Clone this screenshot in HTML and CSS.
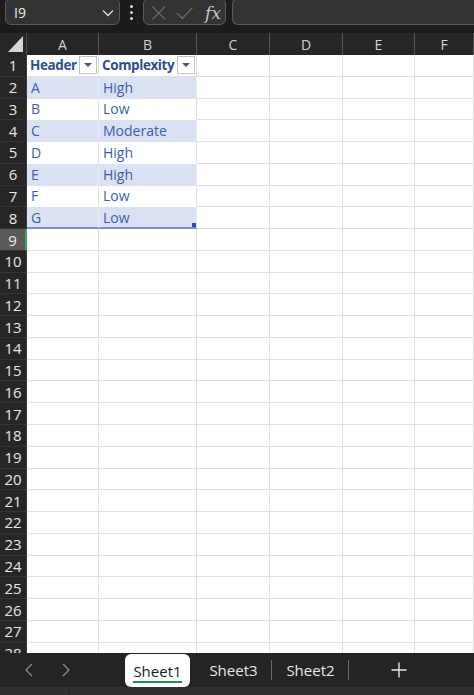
FILE: index.html
```html
<!DOCTYPE html>
<html>
<head>
<meta charset="utf-8">
<link rel="stylesheet" href="styles.css">
</head>
<body>
<div class="app">
  <div class="toolbar">
    <div class="namebox">
      <span class="ref">I9</span>
      <svg class="chev" width="12" height="8" viewBox="0 0 12 8"><path d="M1 1.5 L6 6.5 L11 1.5" fill="none" stroke="#d8d8d8" stroke-width="1.4"/></svg>
    </div>
    <div class="kebab"><i></i><i></i><i></i></div>
    <div class="fbtns">
      <svg width="16" height="16" viewBox="0 0 16 16"><path d="M1.5 1.5 L14.5 14.5 M14.5 1.5 L1.5 14.5" stroke="#6e6e6e" stroke-width="1.3"/></svg>
      <svg width="18" height="14" viewBox="0 0 18 14"><path d="M1 7 L6.5 12.5 L17 1.5" fill="none" stroke="#6e6e6e" stroke-width="1.3"/></svg>
      <span class="fx">fx</span>
    </div>
    <div class="fbar"></div>
  </div>

  <div class="sheet">
    <div class="row head">
      <div class="corner"><span class="tri"></span></div>
      <div class="ch">A</div><div class="ch">B</div><div class="ch">C</div><div class="ch">D</div><div class="ch">E</div><div class="ch">F</div>
    </div>
    <div class="row">
      <div class="rh">1</div>
      <div class="c th"><span class="tt">Header</span><span class="filter"></span></div>
      <div class="c th"><span class="tt">Complexity</span><span class="filter"></span></div>
      <div class="c"></div><div class="c"></div><div class="c"></div><div class="c"></div>
    </div>
    <div class="row">
      <div class="rh">2</div>
      <div class="c td band">A</div><div class="c td band">High</div>
      <div class="c"></div><div class="c"></div><div class="c"></div><div class="c"></div>
    </div>
    <div class="row">
      <div class="rh">3</div>
      <div class="c td">B</div><div class="c td">Low</div>
      <div class="c"></div><div class="c"></div><div class="c"></div><div class="c"></div>
    </div>
    <div class="row">
      <div class="rh">4</div>
      <div class="c td band">C</div><div class="c td band">Moderate</div>
      <div class="c"></div><div class="c"></div><div class="c"></div><div class="c"></div>
    </div>
    <div class="row">
      <div class="rh">5</div>
      <div class="c td">D</div><div class="c td">High</div>
      <div class="c"></div><div class="c"></div><div class="c"></div><div class="c"></div>
    </div>
    <div class="row">
      <div class="rh">6</div>
      <div class="c td band">E</div><div class="c td band">High</div>
      <div class="c"></div><div class="c"></div><div class="c"></div><div class="c"></div>
    </div>
    <div class="row">
      <div class="rh">7</div>
      <div class="c td">F</div><div class="c td">Low</div>
      <div class="c"></div><div class="c"></div><div class="c"></div><div class="c"></div>
    </div>
    <div class="row">
      <div class="rh">8</div>
      <div class="c td band last">G</div><div class="c td band last end">Low<span class="handle"></span></div>
      <div class="c"></div><div class="c"></div><div class="c"></div><div class="c"></div>
    </div>
    <div class="row"><div class="rh sel">9</div><div class="c"></div><div class="c"></div><div class="c"></div><div class="c"></div><div class="c"></div><div class="c"></div></div>
    <div class="row"><div class="rh">10</div><div class="c"></div><div class="c"></div><div class="c"></div><div class="c"></div><div class="c"></div><div class="c"></div></div>
    <div class="row"><div class="rh">11</div><div class="c"></div><div class="c"></div><div class="c"></div><div class="c"></div><div class="c"></div><div class="c"></div></div>
    <div class="row"><div class="rh">12</div><div class="c"></div><div class="c"></div><div class="c"></div><div class="c"></div><div class="c"></div><div class="c"></div></div>
    <div class="row"><div class="rh">13</div><div class="c"></div><div class="c"></div><div class="c"></div><div class="c"></div><div class="c"></div><div class="c"></div></div>
    <div class="row"><div class="rh">14</div><div class="c"></div><div class="c"></div><div class="c"></div><div class="c"></div><div class="c"></div><div class="c"></div></div>
    <div class="row"><div class="rh">15</div><div class="c"></div><div class="c"></div><div class="c"></div><div class="c"></div><div class="c"></div><div class="c"></div></div>
    <div class="row"><div class="rh">16</div><div class="c"></div><div class="c"></div><div class="c"></div><div class="c"></div><div class="c"></div><div class="c"></div></div>
    <div class="row"><div class="rh">17</div><div class="c"></div><div class="c"></div><div class="c"></div><div class="c"></div><div class="c"></div><div class="c"></div></div>
    <div class="row"><div class="rh">18</div><div class="c"></div><div class="c"></div><div class="c"></div><div class="c"></div><div class="c"></div><div class="c"></div></div>
    <div class="row"><div class="rh">19</div><div class="c"></div><div class="c"></div><div class="c"></div><div class="c"></div><div class="c"></div><div class="c"></div></div>
    <div class="row"><div class="rh">20</div><div class="c"></div><div class="c"></div><div class="c"></div><div class="c"></div><div class="c"></div><div class="c"></div></div>
    <div class="row"><div class="rh">21</div><div class="c"></div><div class="c"></div><div class="c"></div><div class="c"></div><div class="c"></div><div class="c"></div></div>
    <div class="row"><div class="rh">22</div><div class="c"></div><div class="c"></div><div class="c"></div><div class="c"></div><div class="c"></div><div class="c"></div></div>
    <div class="row"><div class="rh">23</div><div class="c"></div><div class="c"></div><div class="c"></div><div class="c"></div><div class="c"></div><div class="c"></div></div>
    <div class="row"><div class="rh">24</div><div class="c"></div><div class="c"></div><div class="c"></div><div class="c"></div><div class="c"></div><div class="c"></div></div>
    <div class="row"><div class="rh">25</div><div class="c"></div><div class="c"></div><div class="c"></div><div class="c"></div><div class="c"></div><div class="c"></div></div>
    <div class="row"><div class="rh">26</div><div class="c"></div><div class="c"></div><div class="c"></div><div class="c"></div><div class="c"></div><div class="c"></div></div>
    <div class="row"><div class="rh">27</div><div class="c"></div><div class="c"></div><div class="c"></div><div class="c"></div><div class="c"></div><div class="c"></div></div>
    <div class="row"><div class="rh">28</div><div class="c"></div><div class="c"></div><div class="c"></div><div class="c"></div><div class="c"></div><div class="c"></div></div>
  </div>

  <div class="tabs">
    <div class="nav">
      <svg width="8" height="14" viewBox="0 0 8 14"><path d="M7 1 L1 7 L7 13" fill="none" stroke="#8c8c8c" stroke-width="1.3"/></svg>
      <svg width="8" height="14" viewBox="0 0 8 14"><path d="M1 1 L7 7 L1 13" fill="none" stroke="#8c8c8c" stroke-width="1.3"/></svg>
    </div>
    <div class="tab active"><span>Sheet1</span></div>
    <div class="tab">Sheet3</div>
    <div class="tab">Sheet2</div>
    <div class="add">
      <svg width="16" height="16" viewBox="0 0 16 16"><path d="M8 0.5 V15.5 M0.5 8 H15.5" stroke="#e6e6e6" stroke-width="1.4"/></svg>
    </div>
  </div>
  <div class="status"><div class="seg"></div></div>
</div>
</body>
</html>
```

FILE: styles.css
```css
* { box-sizing: border-box; }
html, body { margin: 0; padding: 0; }
body {
  width: 474px;
  height: 695px;
  overflow: hidden;
  background: #1f1f1f;
  font-family: "Open Sans", "Noto Sans", sans-serif;
}
.app {
  display: flex;
  flex-direction: column;
  width: 474px;
  height: 695px;
}

/* toolbar */
.toolbar {
  height: 33px;
  flex: none;
  display: flex;
  align-items: flex-start;
  padding-left: 5px;
  background: #1c1c1c;
}
.namebox, .fbtns, .fbar {
  margin-top: -2px;
  height: 27px;
  background: #333333;
  border: 1px solid #5a5a5a;
  border-radius: 6px;
  display: flex;
  align-items: center;
}
.namebox {
  width: 115px;
  padding: 2px 4px 0 8px;
  justify-content: space-between;
}
.ref {
  color: #eeeeee;
  font-size: 14px;
}
.chev { margin-right: 1px; }
.kebab {
  width: 23px;
  height: 25px;
  display: flex;
  flex-direction: column;
  align-items: center;
  justify-content: center;
  gap: 3px;
}
.kebab i {
  display: block;
  width: 3px;
  height: 3px;
  border-radius: 50%;
  background: #dcdcdc;
}
.fbtns {
  width: 83px;
  padding: 2px 4px 0 7px;
  gap: 9px;
}
.fx {
  font-family: "DejaVu Serif", "Liberation Serif", serif;
  font-style: italic;
  font-size: 17px;
  color: #c8c8c8;
  margin-left: 3px;
}
.fbar {
  margin-left: 6px;
  flex: 1;
  border-right: none;
  border-radius: 6px 0 0 6px;
}

/* sheet */
.sheet {
  height: 620px;
  flex: none;
  overflow: hidden;
  background: #ffffff;
}
.row {
  display: grid;
  grid-template-columns: 27px 72px 98px 73px 73px 72px 59px;
  height: 21.77px;
}
.row.head {
  height: 22px;
  background: #262626;
}
.corner {
  position: relative;
  background: #262626;
  border-right: 1px solid #4a4a4a;
}
.tri {
  position: absolute;
  right: 3px;
  bottom: 3px;
  width: 0;
  height: 0;
  border-left: 15px solid transparent;
  border-bottom: 16px solid #d6d6d6;
}
.ch {
  color: #d2d2d2;
  font-size: 14px;
  display: flex;
  align-items: center;
  justify-content: center;
  border-right: 1px solid #555555;
  padding-top: 1px;
}
.rh {
  background: #262626;
  color: #e6e6e6;
  font-size: 15px;
  display: flex;
  align-items: center;
  justify-content: center;
  border-bottom: 1px solid #333333;
  border-right: 1px solid #3a3a3a;
}
.rh.sel {
  background: #5a5a5a;
  border-right: 2px solid #3f9e5e;
  color: #f0f0f0;
}
.c {
  border-right: 1px solid #e0e0e0;
  border-bottom: 1px solid #e0e0e0;
  display: flex;
  align-items: center;
  padding-left: 4px;
  font-size: 14px;
  white-space: nowrap;
  overflow: hidden;
  position: relative;
}
.th {
  font-weight: 700;
  font-size: 13.5px;
  letter-spacing: -0.4px;
  color: #2f4d8c;
  padding-left: 3px;
  padding-right: 1px;
  background: #ffffff;
}
.tt {
  flex: 1;
  overflow: hidden;
  min-width: 0;
}
.filter {
  flex: none;
  width: 18px;
  height: 18px;
  border: 1px solid #c4c4c4;
  background: #ffffff;
  display: flex;
  align-items: center;
  justify-content: center;
}
.filter::after {
  content: "";
  width: 0;
  height: 0;
  border-left: 4px solid transparent;
  border-right: 4px solid transparent;
  border-top: 4px solid #555555;
}
.td {
  color: #3d5fa6;
}
.band {
  background: #d9e1f2;
  border-bottom-color: #d9e1f2;
  border-right-color: #e4e9f6;
}
.td:not(.band) {
  border-bottom-color: #ffffff;
}
.last {
  border-bottom: 2px solid #7390cf;
  padding-top: 1px;
}
.handle {
  position: absolute;
  right: 0;
  bottom: 0;
  width: 4px;
  height: 4px;
  background: #2f4f9c;
}

/* tabs */
.tabs {
  height: 34px;
  flex: none;
  background: #242424;
  display: flex;
  align-items: stretch;
}
.nav {
  width: 125px;
  display: flex;
  align-items: center;
  gap: 29px;
  padding-left: 25px;
  border-top-right-radius: 6px;
}
.tab {
  width: 77px;
  display: flex;
  align-items: center;
  justify-content: center;
  color: #e8e8e8;
  font-size: 15px;
  position: relative;
}
.tab::after {
  content: "";
  position: absolute;
  right: 0;
  top: 7px;
  bottom: 7px;
  width: 1px;
  background: #6a6a6a;
}
.tab.active {
  width: 65px;
  background: #ffffff;
  color: #1b1b1b;
  border-radius: 6px;
  margin-right: 5px;
  margin-top: 1px;
}
.tab.active::after { display: none; }
.tab.active span {
  border-bottom: 2px solid #1f8a4c;
  padding-bottom: 0;
  line-height: 20px;
  margin-top: 2px;
}
.add {
  width: 100px;
  display: flex;
  align-items: center;
  justify-content: center;
}
.status {
  flex: 1;
  background: #303030;
  display: flex;
}
.seg {
  width: 70px;
  border-right: 1px solid #232323;
}
```
